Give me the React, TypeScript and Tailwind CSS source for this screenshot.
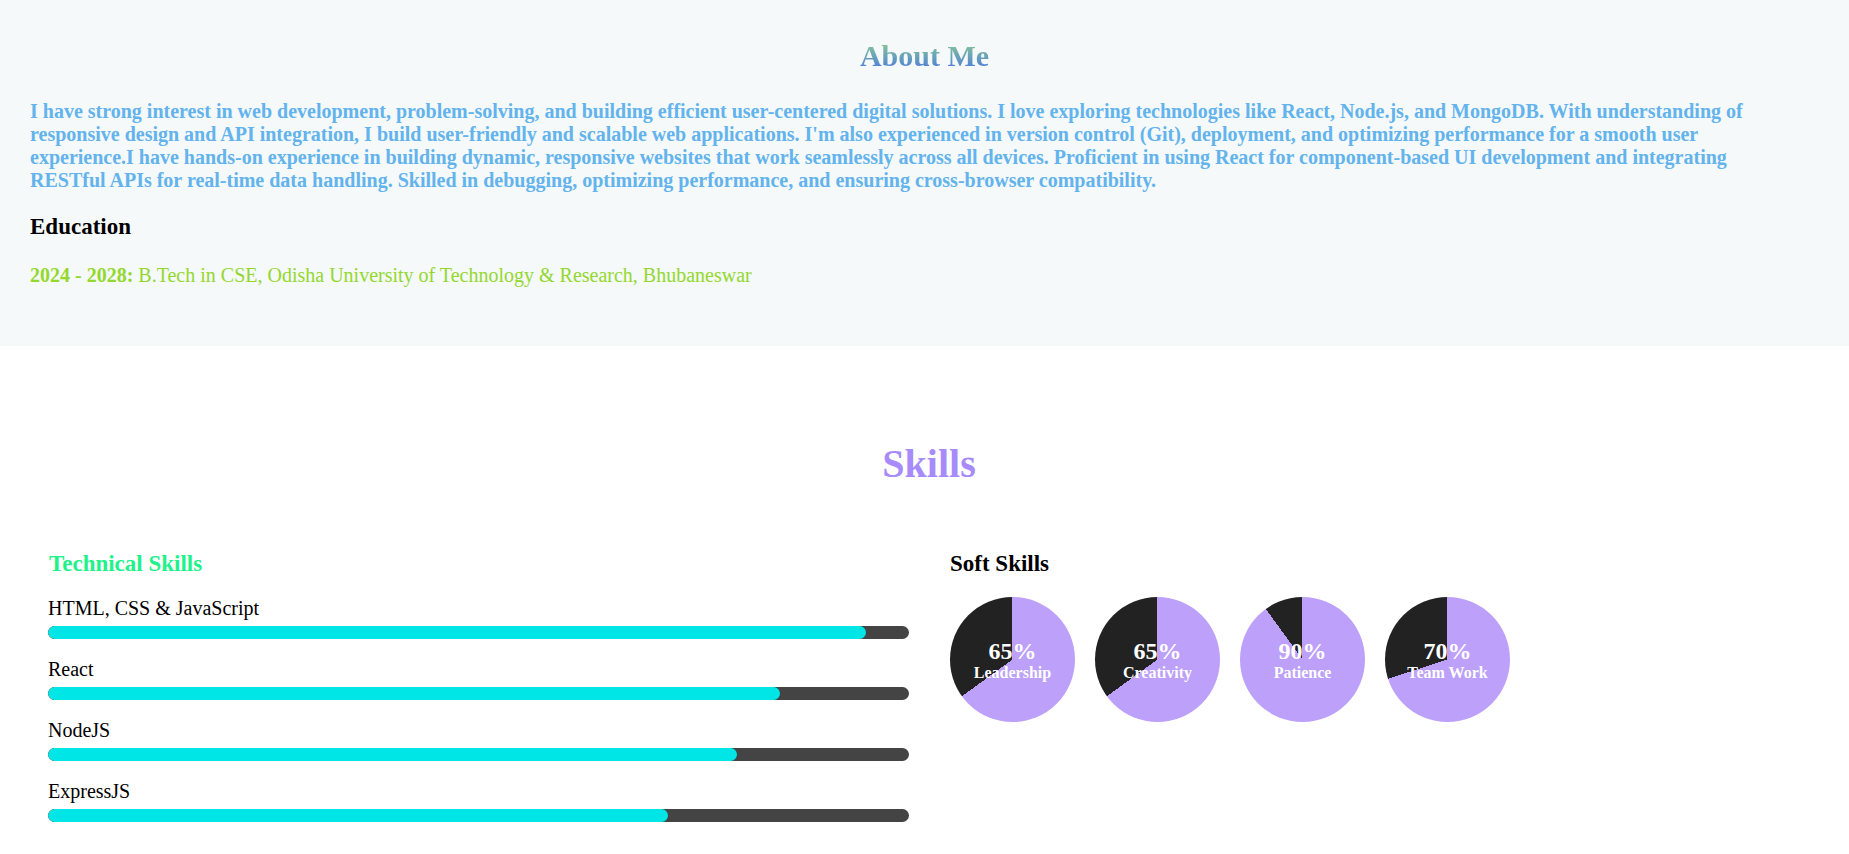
import React from 'react';

const techSkills = [
  { name: 'HTML, CSS & JavaScript', level: 95 },
  { name: 'React', level: 85 },
  { name: 'NodeJS', level: 80 },
  { name: 'ExpressJS', level: 72 },
];

const softSkills = [
  { name: 'Leadership', level: 65 },
  { name: 'Creativity', level: 65 },
  { name: 'Patience', level: 90 },
  { name: 'Team Work', level: 70 },
];

function SkillBar({ name, level }: { name: string; level: number }) {
  return (
    <div className="mb-[19px]">
      <p className="text-[20px] leading-[23px] text-black">{name}</p>
      <div className="mt-[6px] h-[13px] w-full rounded-full bg-[#444444] overflow-hidden">
        <div className="h-full rounded-full bg-[#00e6e6]" style={{ width: `${level}%` }}></div>
      </div>
    </div>
  );
}

function SkillPie({ name, level }: { name: string; level: number }) {
  return (
    <div
      className="w-[125px] h-[125px] rounded-full flex flex-col items-center justify-center text-white font-bold"
      style={{ background: `conic-gradient(#bca0fa 0 ${level}%, #222222 ${level}% 100%)` }}
    >
      <span className="text-[24px] leading-[26px]">{level}%</span>
      <span className="text-[16px] leading-[18px]">{name}</span>
    </div>
  );
}

export default function App() {
  return (
    <div className="font-['Liberation_Serif',serif] bg-white min-h-screen">
      {/* About */}
      <section className="bg-[#f5f9fa] pl-[30px] pr-[94px] pt-[39px] pb-[59px]">
        <h2 className="text-center text-[30px] leading-[34px] font-bold pl-[64px]">
          <span className="bg-gradient-to-b from-[#94cf80] to-[#4e72dc] bg-clip-text text-transparent">About Me</span>
        </h2>
        <p className="mt-[27px] text-[20px] leading-[23px] font-bold text-[#63b3ed]">
          I have strong interest in web development, problem-solving, and building efficient user-centered digital solutions. I love exploring technologies like React, Node.js, and MongoDB. With understanding of responsive design and API integration, I build user-friendly and scalable web applications. I'm also experienced in version control (Git), deployment, and optimizing performance for a smooth user experience.I have hands-on experience in building dynamic, responsive websites that work seamlessly across all devices. Proficient in using React for component-based UI development and integrating RESTful APIs for real-time data handling. Skilled in debugging, optimizing performance, and ensuring cross-browser compatibility.
        </p>
        <h3 className="mt-[22px] text-[23px] leading-[26px] font-bold text-black">Education</h3>
        <p className="mt-[24px] text-[20px] leading-[23px] text-[#94d82d]">
          <strong>2024 - 2028:</strong> B.Tech in CSE, Odisha University of Technology &amp; Research, Bhubaneswar
        </p>
      </section>

      {/* Skills */}
      <section className="pt-[95px] pb-[40px] pl-[48px] pr-[39px]">
        <h2 className="text-center text-[40px] leading-[46px] font-bold text-[#a78bfa]">Skills</h2>
        <div className="mt-[64px] grid grid-cols-2 gap-[40px]">
          <div>
            <h3 className="text-[23px] leading-[26px] font-bold text-[#1ef28a] pl-[1px]">Technical Skills</h3>
            <div className="mt-[20px]">
              {techSkills.map((s) => (
                <SkillBar key={s.name} name={s.name} level={s.level} />
              ))}
            </div>
          </div>
          <div>
            <h3 className="text-[23px] leading-[26px] font-bold text-black pl-[1px]">Soft Skills</h3>
            <div className="mt-[20px] flex gap-[20px] pl-[1px]">
              {softSkills.map((s) => (
                <SkillPie key={s.name} name={s.name} level={s.level} />
              ))}
            </div>
          </div>
        </div>
      </section>
    </div>
  );
}
